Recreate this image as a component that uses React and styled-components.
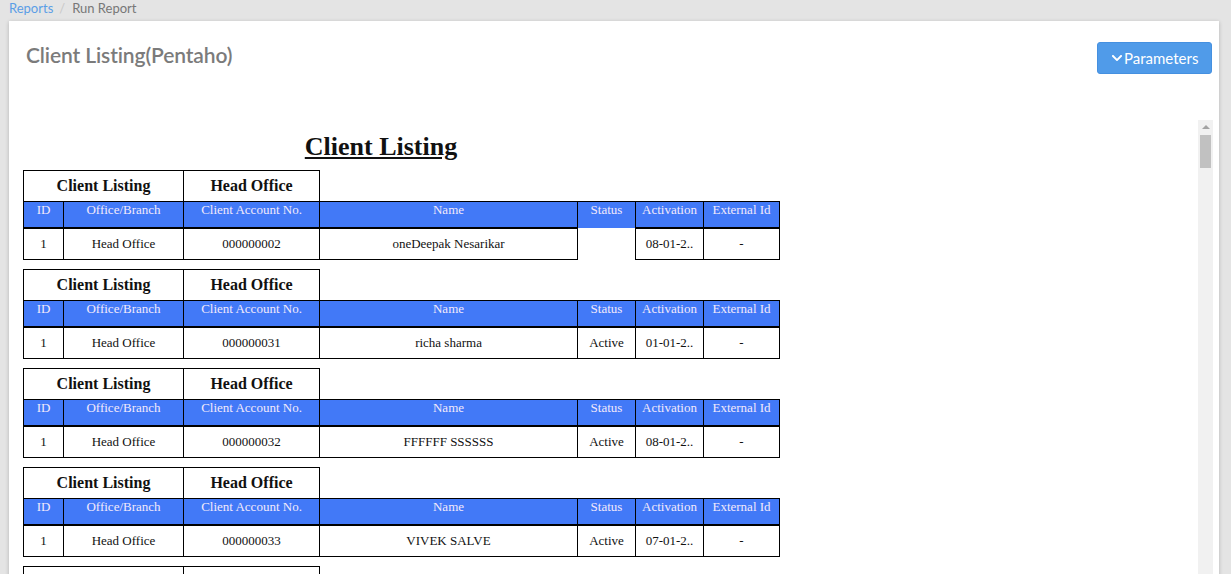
import React from "react";
import styled, { createGlobalStyle } from "styled-components";
import { FaChevronDown } from "react-icons/fa";

const GlobalStyle = createGlobalStyle`
  html, body {
    margin: 0;
    padding: 0;
    overflow: hidden;
    background-color: #e4e4e4;
    font-family: Lato, "Open Sans", sans-serif;
  }
`;

const Page = styled.div`
  height: 100vh;
  overflow: hidden;
`;

const Breadcrumb = styled.div`
  display: flex;
  align-items: center;
  height: 16px;
  padding-left: 9px;
  font-size: 13px;
  color: #777;
  & > a {
    color: #5b9ee6;
    text-decoration: none;
  }
`;

const Divider = styled.span`
  margin: 0 7px 0 6px;
  color: #c8c8c8;
`;

const Card = styled.div`
  margin: 5px 12px 0 9px;
  padding: 21px 6px 0 6px;
  background-color: #fff;
  box-shadow: 0 1px 4px rgba(0, 0, 0, 0.22);
  min-height: 600px;
`;

const Header = styled.div`
  display: flex;
  justify-content: space-between;
  align-items: flex-start;
  padding: 0 1px 0 11px;
`;

const Title = styled.h1`
  margin: 0;
  font-size: 21px;
  line-height: 1.2;
  font-weight: 600;
  color: #7b7b7b;
  letter-spacing: -0.1px;
`;

const ParamButton = styled.button`
  display: flex;
  align-items: center;
  gap: 1px;
  height: 32px;
  width: 115px;
  padding: 0 12px 0 13px;
  border: 1px solid #4590e0;
  border-radius: 3px;
  background-color: #509be9;
  color: #fff;
  font-family: Lato, "Open Sans", sans-serif;
  font-size: 15px;
  & svg {
    font-size: 12px;
  }
`;

const Frame = styled.div`
  display: flex;
  margin-top: 46px;
  height: 480px;
`;

const Report = styled.div`
  flex: 1;
  padding: 11px 0 0 8px;
  font-family: "Liberation Serif", "Times New Roman", serif;
  color: #111;
`;

const ReportTitle = styled.div`
  width: 716px;
  text-align: center;
  font-size: 26px;
  font-weight: bold;
  text-decoration: underline;
  margin-top: 1px;
  margin-bottom: 8px;
`;

const Scrollbar = styled.div`
  display: flex;
  flex-direction: column;
  align-items: center;
  width: 15px;
  background-color: #f1f1f1;
`;

const ArrowUp = styled.div`
  margin-top: 5px;
  width: 0;
  height: 0;
  border-left: 4px solid transparent;
  border-right: 4px solid transparent;
  border-bottom: 4px solid #a3a3a3;
`;

const Thumb = styled.div`
  margin-top: 6px;
  width: 11px;
  height: 33px;
  background-color: #c1c1c1;
`;

const Group = styled.table`
  border-collapse: collapse;
  table-layout: fixed;
  width: 756px;
  margin-bottom: 9px;
`;

const GroupCell = styled.td`
  height: 30px;
  padding: 0;
  text-align: center;
  vertical-align: middle;
  font-size: 16px;
  font-weight: bold;
  border: 1px solid #000;
`;

const HeadCell = styled.th`
  height: 25px;
  padding: 0;
  text-align: center;
  vertical-align: top;
  font-size: 13px;
  font-weight: normal;
  color: #f2e9fb;
  background-color: #4279f7;
  border: 1px solid #000;
  border-bottom: none;
`;

const DataCell = styled.td`
  height: 30px;
  padding: 0;
  text-align: center;
  vertical-align: middle;
  font-size: 13px;
  white-space: nowrap;
  border: ${(p) => (p.$empty ? "none" : "1px solid #000")};
  border-top: ${(p) => (p.$empty ? "none" : "2px solid #000")};
`;

const widths = [40, 120, 136, 258, 58, 68, 76];
const columns = [
  "ID",
  "Office/Branch",
  "Client Account No.",
  "Name",
  "Status",
  "Activation",
  "External Id",
];

const clients = [
  { account: "000000002", name: "oneDeepak Nesarikar", status: "", date: "08-01-2.." },
  { account: "000000031", name: "richa sharma", status: "Active", date: "01-01-2.." },
  { account: "000000032", name: "FFFFFF SSSSSS", status: "Active", date: "08-01-2.." },
  { account: "000000033", name: "VIVEK SALVE", status: "Active", date: "07-01-2.." },
  { account: "000000034", name: "Amit Patil", status: "Active", date: "07-01-2.." },
];

const ClientGroup = ({ client }) => (
  <Group>
    <colgroup>
      {widths.map((w, i) => (
        <col key={i} style={{ width: w }} />
      ))}
    </colgroup>
    <tbody>
      <tr>
        <GroupCell colSpan={2}>Client Listing</GroupCell>
        <GroupCell>Head Office</GroupCell>
        <td colSpan={4} />
      </tr>
      <tr>
        {columns.map((c) => (
          <HeadCell key={c}>{c}</HeadCell>
        ))}
      </tr>
      <tr>
        <DataCell>1</DataCell>
        <DataCell>Head Office</DataCell>
        <DataCell>{client.account}</DataCell>
        <DataCell>{client.name}</DataCell>
        <DataCell $empty={!client.status}>{client.status}</DataCell>
        <DataCell>{client.date}</DataCell>
        <DataCell>-</DataCell>
      </tr>
    </tbody>
  </Group>
);

const App = () => {
  return (
    <Page>
      <GlobalStyle />
      <Breadcrumb>
        <a href="#">Reports</a>
        <Divider>/</Divider>
        <span>Run Report</span>
      </Breadcrumb>
      <Card>
        <Header>
          <Title>Client Listing(Pentaho)</Title>
          <ParamButton>
            <FaChevronDown />
            Parameters
          </ParamButton>
        </Header>
        <Frame>
          <Report>
            <ReportTitle>Client Listing</ReportTitle>
            {clients.map((c) => (
              <ClientGroup key={c.account} client={c} />
            ))}
          </Report>
          <Scrollbar>
            <ArrowUp />
            <Thumb />
          </Scrollbar>
        </Frame>
      </Card>
    </Page>
  );
};

export default App;
